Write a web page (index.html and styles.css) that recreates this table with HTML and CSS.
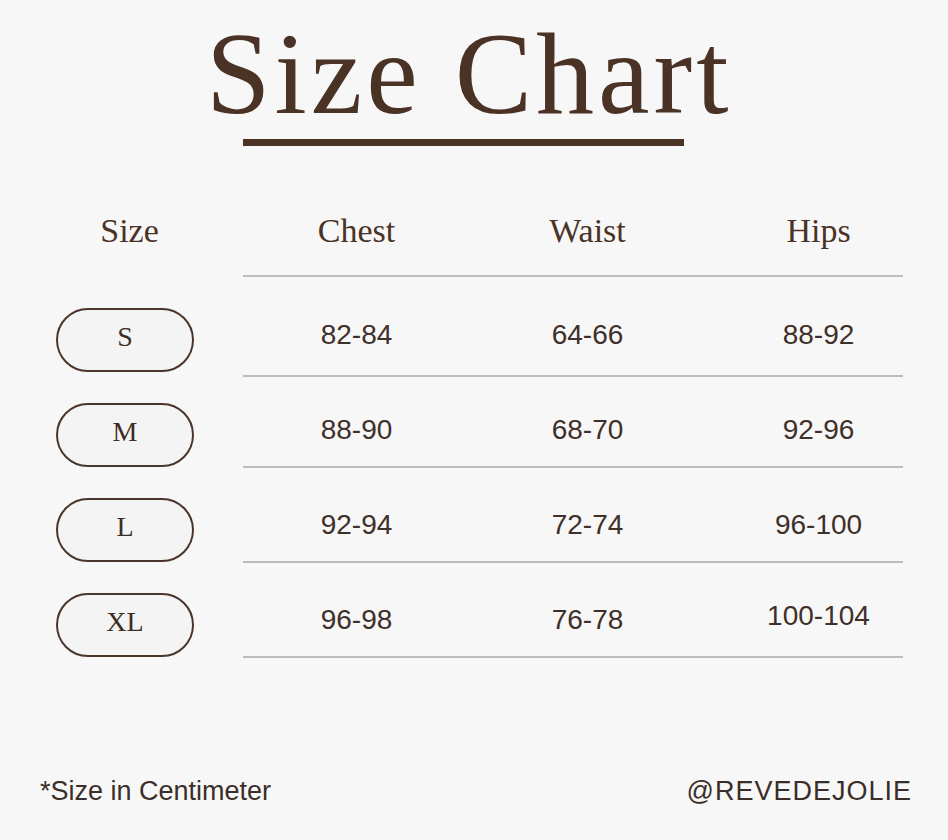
FILE: index.html
```html
<!DOCTYPE html>
<html lang="en">
<head>
<meta charset="utf-8">
<title>Size Chart</title>
<link rel="stylesheet" href="styles.css">
</head>
<body>
<main class="page">
  <header class="hero">
    <h1 class="title">Size Chart</h1>
    <div class="title-rule"></div>
  </header>

  <section class="chart">
    <div class="row head">
      <div class="size-col"><span class="size-label">Size</span></div>
      <div class="data">
        <div class="cell">Chest</div>
        <div class="cell">Waist</div>
        <div class="cell">Hips</div>
      </div>
    </div>
    <div class="row r1">
      <div class="size-col"><span class="pill">S</span></div>
      <div class="data">
        <div class="cell">82-84</div>
        <div class="cell">64-66</div>
        <div class="cell">88-92</div>
      </div>
    </div>
    <div class="row r2">
      <div class="size-col"><span class="pill">M</span></div>
      <div class="data">
        <div class="cell">88-90</div>
        <div class="cell">68-70</div>
        <div class="cell">92-96</div>
      </div>
    </div>
    <div class="row r3">
      <div class="size-col"><span class="pill">L</span></div>
      <div class="data">
        <div class="cell">92-94</div>
        <div class="cell">72-74</div>
        <div class="cell">96-100</div>
      </div>
    </div>
    <div class="row r4">
      <div class="size-col"><span class="pill">XL</span></div>
      <div class="data">
        <div class="cell">96-98</div>
        <div class="cell">76-78</div>
        <div class="cell raise">100-104</div>
      </div>
    </div>
  </section>

  <footer class="foot">
    <span class="note">*Size in Centimeter</span>
    <span class="handle">@REVEDEJOLIE</span>
  </footer>
</main>
</body>
</html>
```

FILE: styles.css
```css
html, body {
  margin: 0;
  padding: 0;
  background: #f7f7f7;
}

.page {
  width: 948px;
  height: 840px;
  background: #f7f7f7;
  color: #45332a;
  font-family: "Liberation Sans", Arial, sans-serif;
  overflow: hidden;
}

.hero {
  padding-top: 16px;
}

.title {
  margin: 0;
  padding-left: 206px;
  font-family: "Liberation Serif", "Times New Roman", serif;
  font-weight: normal;
  font-size: 116px;
  line-height: 116px;
  letter-spacing: 4px;
  color: #4a3224;
}

.title-rule {
  margin: 7px 0 0 243px;
  width: 441px;
  height: 7px;
  background: #4a3224;
}

.chart {
  margin-top: 65px;
}

.row {
  display: flex;
  align-items: flex-start;
}

.size-col {
  width: 243px;
  padding-left: 56px;
  box-sizing: border-box;
  flex: none;
}

.data {
  width: 660px;
  display: grid;
  grid-template-columns: 231px 231px 198px;
  border-bottom: 2px solid #bcbcbc;
}

.cell {
  width: 231px;
  margin-left: -2px;
  height: 64px;
  line-height: 64px;
  text-align: center;
  font-size: 28px;
  color: #3f302a;
  white-space: nowrap;
}

.cell.raise {
  line-height: 56px;
}

/* header row */
.head .data {
  padding-bottom: 24px;
}

.head .cell {
  height: 40px;
  line-height: 40px;
  font-family: "Liberation Serif", "Times New Roman", serif;
  font-size: 34px;
  color: #4a3326;
}

.size-label {
  display: block;
  width: 138px;
  padding-left: 9px;
  box-sizing: border-box;
  text-align: center;
  font-family: "Liberation Serif", "Times New Roman", serif;
  font-size: 34px;
  line-height: 40px;
  color: #4a3326;
}

/* pills */
.pill {
  display: block;
  width: 138px;
  height: 64px;
  box-sizing: border-box;
  border: 2px solid #4a352b;
  border-radius: 32px;
  background: #f4f4f4;
  padding-bottom: 6px;
  text-align: center;
  line-height: 54px;
  font-family: "Liberation Serif", "Times New Roman", serif;
  font-size: 28px;
  color: #3d2c24;
}

/* per-row vertical rhythm */
.r1 .data { padding-top: 26px; padding-bottom: 8px; }
.r1 .size-col { padding-top: 31px; }

.r2 .data { padding-top: 21px; padding-bottom: 4px; }
.r2 .size-col { padding-top: 26px; }

.r3 .data, .r4 .data { padding-top: 25px; padding-bottom: 4px; }
.r3 .size-col, .r4 .size-col { padding-top: 30px; }

/* footer */
.foot {
  margin-top: 117px;
  display: flex;
  justify-content: space-between;
  padding: 0 36px 0 40px;
  font-size: 27px;
  line-height: 32px;
  color: #3b2e28;
}

.handle {
  letter-spacing: 1px;
}
```
